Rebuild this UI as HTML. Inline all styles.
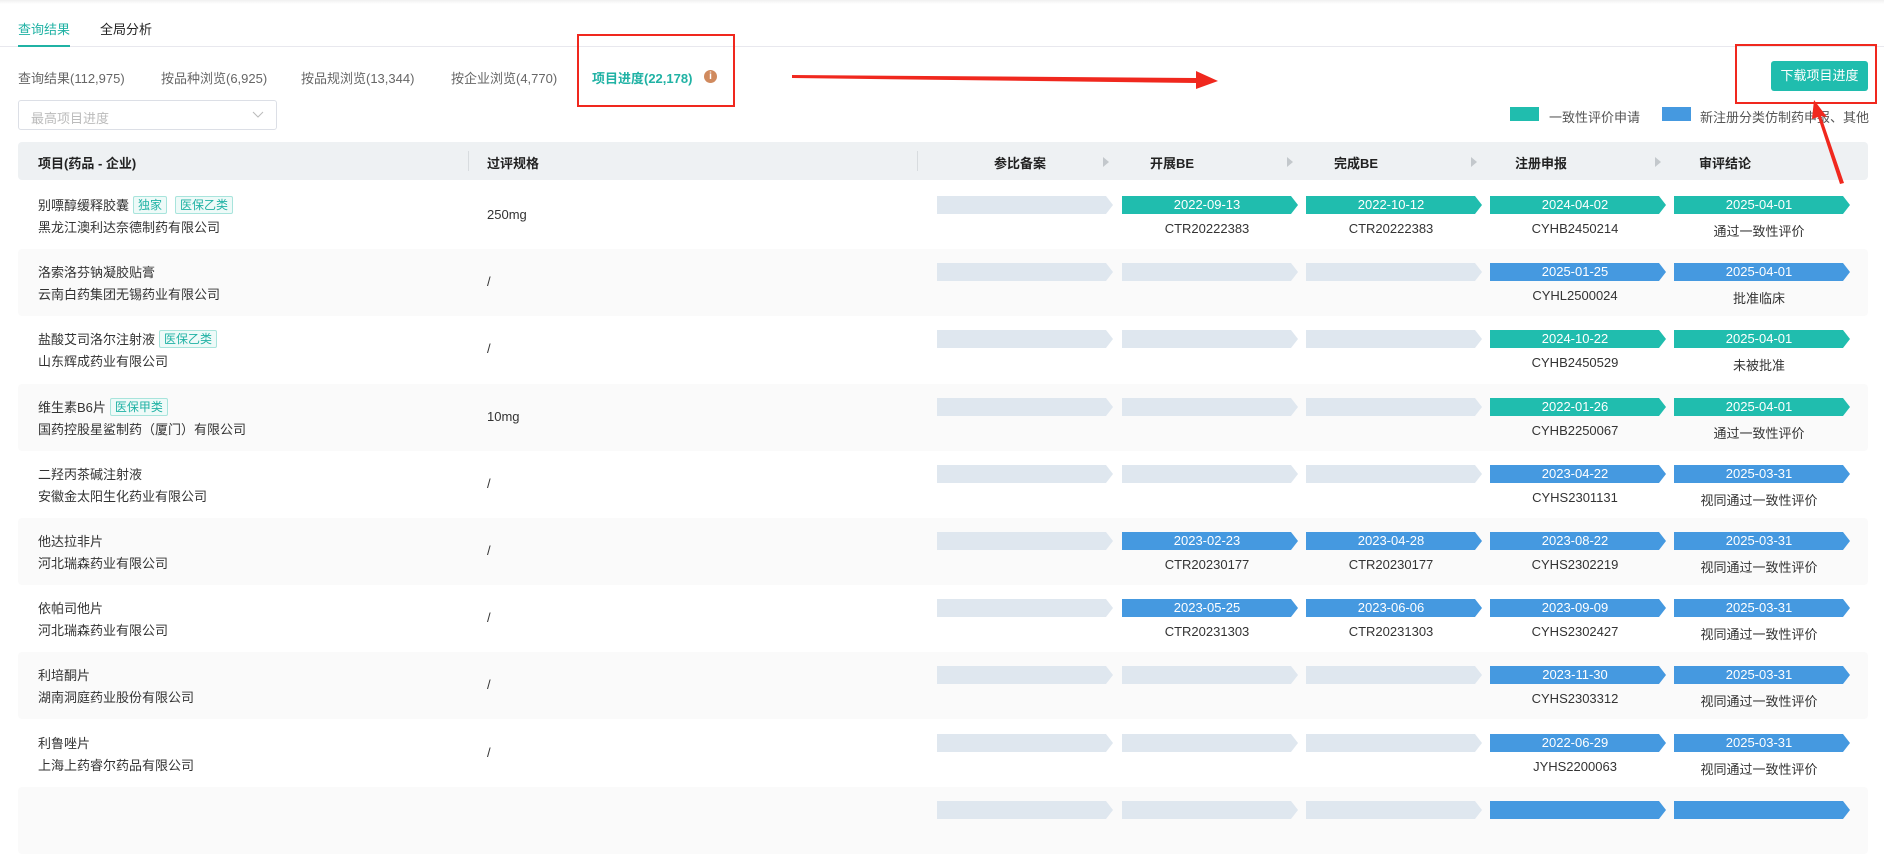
<!DOCTYPE html>
<html><head><meta charset="utf-8"><style>
*{margin:0;padding:0;box-sizing:border-box}
body{width:1884px;height:801px;overflow:hidden;background:#fff;font-family:"Liberation Sans","Noto Sans CJK SC",sans-serif;color:#333;position:relative;font-size:13px}
.a{position:absolute;white-space:nowrap}
.row{position:absolute;left:18px;width:1850px;height:67px;border-radius:4px}
.row.g{background:#fafafa}
.bar{position:absolute;top:14px;width:176px;height:18px;clip-path:polygon(0 0,calc(100% - 7px) 0,100% 50%,calc(100% - 7px) 100%,0 100%);color:#fff;font-size:13px;line-height:18px;text-align:center;padding-right:6px}
.e{background:#dfe7ef}.t{background:#20bdae}.b{background:#4599e0}
.c1{left:919px}.c2{left:1104px}.c3{left:1288px}.c4{left:1472px}.c5{left:1656px}
.sub{position:absolute;top:39px;width:170px;text-align:center;font-size:13px;color:#333}
.n1{position:absolute;left:20px;top:13px;font-size:13px}
.n2{position:absolute;left:20px;top:35px;font-size:13px}
.sp{position:absolute;left:469px;top:25px;font-size:13px}
.tag{display:inline-block;border:1px solid #a8e4dc;background:#eefaf8;color:#20b2a4;font-size:12px;line-height:16px;padding:0 4px;margin-left:4px;border-radius:2px;vertical-align:1px}
.hd{position:absolute;top:142px;left:18px;width:1850px;height:38px;background:#eef1f3;border-radius:4px}
.hd .a{top:11px;font-weight:bold;font-size:13px;color:#222}
.tri{position:absolute;top:15px;width:0;height:0;border-left:6px solid #c3c8cc;border-top:5px solid transparent;border-bottom:5px solid transparent}
</style></head><body>
<div class="a" style="left:0;top:0;width:1884px;height:4px;background:linear-gradient(#f0f0f0,#fff)"></div>
<div class="a" style="left:18px;top:19px;color:#20b2a4;font-size:13px">查询结果</div>
<div class="a" style="left:100px;top:19px;color:#222;font-size:13px">全局分析</div>
<div class="a" style="left:0;top:46px;width:1884px;height:1px;background:#e8e8ee"></div>
<div class="a" style="left:18px;top:45px;width:52px;height:2px;background:#20b2a4"></div>
<div class="a" style="left:18px;top:68px;color:#666">查询结果(112,975)</div>
<div class="a" style="left:161px;top:68px;color:#666">按品种浏览(6,925)</div>
<div class="a" style="left:301px;top:68px;color:#666">按品规浏览(13,344)</div>
<div class="a" style="left:451px;top:68px;color:#666">按企业浏览(4,770)</div>
<div class="a" style="left:592px;top:68px;color:#20b2a4;font-weight:bold">项目进度(22,178)</div>
<div class="a" style="left:704px;top:70px;width:13px;height:13px;border-radius:50%;background:#d08a5e;color:#fff;font-size:10px;font-weight:bold;text-align:center;line-height:13px">i</div>
<div class="a" style="left:577px;top:34px;width:158px;height:73px;border:2px solid #f0281e"></div>
<svg class="a" style="left:790px;top:68px" width="440" height="22"><polygon points="2,7 406,10 406,3 428,13 406,21 406,15 2,10" fill="#f0281e"/></svg>
<div class="a" style="left:18px;top:100px;width:259px;height:30px;border:1px solid #dcdfe6;border-radius:3px;color:#bbb;padding:7px 12px;font-size:13px">最高项目进度</div>
<svg class="a" style="left:252px;top:111px" width="12" height="8"><path d="M1 1l5 5 5-5" fill="none" stroke="#bbb" stroke-width="1"/></svg>
<div class="a" style="left:1771px;top:61px;width:97px;height:30px;background:#20bdae;border-radius:3px;color:#fff;text-align:center;line-height:30px;font-size:13px">下载项目进度</div>
<div class="a" style="left:1735px;top:44px;width:142px;height:60px;border:2px solid #f0281e"></div>
<div class="a" style="left:1510px;top:107px;width:29px;height:14px;background:#20bdae"></div>
<div class="a" style="left:1549px;top:107px;color:#555">一致性评价申请</div>
<div class="a" style="left:1662px;top:107px;width:29px;height:14px;background:#4599e0"></div>
<div class="a" style="left:1700px;top:107px;color:#555">新注册分类仿制药申报、其他</div>
<div class="hd">
<div class="a" style="left:20px">项目(药品 - 企业)</div>
<div class="a" style="left:450px;top:9px;width:1px;height:20px;background:#d8dcdf"></div>
<div class="a" style="left:469px">过评规格</div>
<div class="a" style="left:899px;top:9px;width:1px;height:20px;background:#d8dcdf"></div>
<div class="a" style="left:976px;width:50px;text-align:center">参比备案</div>
<div class="a" style="left:1129px;width:50px;text-align:center">开展BE</div>
<div class="a" style="left:1313px;width:50px;text-align:center">完成BE</div>
<div class="a" style="left:1497px;width:50px;text-align:center">注册申报</div>
<div class="a" style="left:1681px;width:50px;text-align:center">审评结论</div>
<div class="tri" style="left:1085px"></div><div class="tri" style="left:1269px"></div><div class="tri" style="left:1453px"></div><div class="tri" style="left:1637px"></div>
</div>

<div class="row" style="top:182px"><div class="n1">别嘌醇缓释胶囊<span class="tag">独家</span><span class="tag" style="margin-left:8px">医保乙类</span></div><div class="n2">黑龙江澳利达奈德制药有限公司</div><div class="sp">250mg</div>
<div class="bar e c1"></div><div class="bar t c2">2022-09-13</div><div class="sub c2">CTR20222383</div><div class="bar t c3">2022-10-12</div><div class="sub c3">CTR20222383</div><div class="bar t c4">2024-04-02</div><div class="sub c4">CYHB2450214</div><div class="bar t c5">2025-04-01</div><div class="sub c5">通过一致性评价</div></div>

<div class="row g" style="top:249px"><div class="n1">洛索洛芬钠凝胶贴膏</div><div class="n2">云南白药集团无锡药业有限公司</div><div class="sp">/</div>
<div class="bar e c1"></div><div class="bar e c2"></div><div class="bar e c3"></div><div class="bar b c4">2025-01-25</div><div class="sub c4">CYHL2500024</div><div class="bar b c5">2025-04-01</div><div class="sub c5">批准临床</div></div>

<div class="row" style="top:316px"><div class="n1">盐酸艾司洛尔注射液<span class="tag">医保乙类</span></div><div class="n2">山东辉成药业有限公司</div><div class="sp">/</div>
<div class="bar e c1"></div><div class="bar e c2"></div><div class="bar e c3"></div><div class="bar t c4">2024-10-22</div><div class="sub c4">CYHB2450529</div><div class="bar t c5">2025-04-01</div><div class="sub c5">未被批准</div></div>

<div class="row g" style="top:384px"><div class="n1">维生素B6片<span class="tag">医保甲类</span></div><div class="n2">国药控股星鲨制药（厦门）有限公司</div><div class="sp">10mg</div>
<div class="bar e c1"></div><div class="bar e c2"></div><div class="bar e c3"></div><div class="bar t c4">2022-01-26</div><div class="sub c4">CYHB2250067</div><div class="bar t c5">2025-04-01</div><div class="sub c5">通过一致性评价</div></div>

<div class="row" style="top:451px"><div class="n1">二羟丙茶碱注射液</div><div class="n2">安徽金太阳生化药业有限公司</div><div class="sp">/</div>
<div class="bar e c1"></div><div class="bar e c2"></div><div class="bar e c3"></div><div class="bar b c4">2023-04-22</div><div class="sub c4">CYHS2301131</div><div class="bar b c5">2025-03-31</div><div class="sub c5">视同通过一致性评价</div></div>

<div class="row g" style="top:518px"><div class="n1">他达拉非片</div><div class="n2">河北瑞森药业有限公司</div><div class="sp">/</div>
<div class="bar e c1"></div><div class="bar b c2">2023-02-23</div><div class="sub c2">CTR20230177</div><div class="bar b c3">2023-04-28</div><div class="sub c3">CTR20230177</div><div class="bar b c4">2023-08-22</div><div class="sub c4">CYHS2302219</div><div class="bar b c5">2025-03-31</div><div class="sub c5">视同通过一致性评价</div></div>

<div class="row" style="top:585px"><div class="n1">依帕司他片</div><div class="n2">河北瑞森药业有限公司</div><div class="sp">/</div>
<div class="bar e c1"></div><div class="bar b c2">2023-05-25</div><div class="sub c2">CTR20231303</div><div class="bar b c3">2023-06-06</div><div class="sub c3">CTR20231303</div><div class="bar b c4">2023-09-09</div><div class="sub c4">CYHS2302427</div><div class="bar b c5">2025-03-31</div><div class="sub c5">视同通过一致性评价</div></div>

<div class="row g" style="top:652px"><div class="n1">利培酮片</div><div class="n2">湖南洞庭药业股份有限公司</div><div class="sp">/</div>
<div class="bar e c1"></div><div class="bar e c2"></div><div class="bar e c3"></div><div class="bar b c4">2023-11-30</div><div class="sub c4">CYHS2303312</div><div class="bar b c5">2025-03-31</div><div class="sub c5">视同通过一致性评价</div></div>

<div class="row" style="top:720px"><div class="n1">利鲁唑片</div><div class="n2">上海上药睿尔药品有限公司</div><div class="sp">/</div>
<div class="bar e c1"></div><div class="bar e c2"></div><div class="bar e c3"></div><div class="bar b c4">2022-06-29</div><div class="sub c4">JYHS2200063</div><div class="bar b c5">2025-03-31</div><div class="sub c5">视同通过一致性评价</div></div>

<div class="row g" style="top:787px">
<div class="bar e c1"></div><div class="bar e c2"></div><div class="bar e c3"></div><div class="bar b c4"></div><div class="bar b c5"></div></div>

<svg class="a" style="left:1800px;top:95px" width="60" height="95"><polygon points="14,5 27,22 21,21 44,88 40,89 18,22 12,24" fill="#f0281e"/></svg>
</body></html>
